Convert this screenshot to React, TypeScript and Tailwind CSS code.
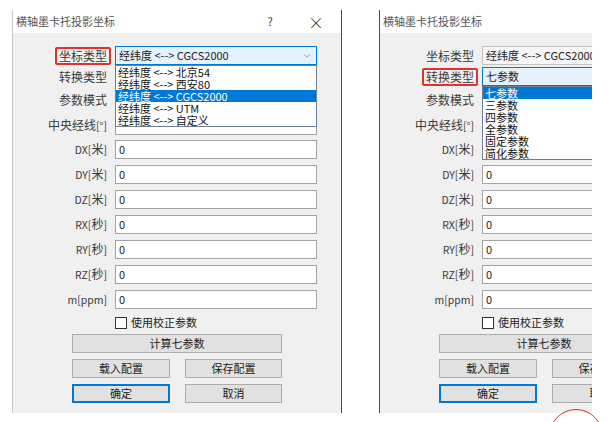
import { ChevronDown } from "lucide-react";

const font = { fontFamily: '"Noto Sans CJK SC", "Noto Sans", sans-serif' };

const coordOptions = ["经纬度 <--> 北京54", "经纬度 <--> 西安80", "经纬度 <--> CGCS2000", "经纬度 <--> UTM", "经纬度 <--> 自定义"];
const convOptions = ["七参数", "三参数", "四参数", "全参数", "固定参数", "简化参数"];

const fields = [
    { label: "DX[米]", mt: "mt-[5px]" },
    { label: "DY[米]", mt: "mt-[6px]" },
    { label: "DZ[米]", mt: "mt-[6px]" },
    { label: "RX[秒]", mt: "mt-[6px]" },
    { label: "RY[秒]", mt: "mt-[6px]" },
    { label: "RZ[秒]", mt: "mt-[6px]" },
    { label: "m[ppm]", mt: "mt-[6px]" },
];

// latin runs in the labels are set a bit smaller, like Segoe next to YaHei
function splitText(text: string) {
    return text.split(/([\x20-\x7e°]+)/).filter(Boolean).map((part, i) =>
        /^[\x20-\x7e°]+$/.test(part) ? <span key={i} className="text-[10.5px]">{part}</span> : <span key={i}>{part}</span>
    );
}

function Label({ text, marked }: { text: string; marked?: boolean }) {
    return (
        <div className="w-[98px] flex justify-end shrink-0">
            <span className={`border-2 rounded-[2px] px-[2px] leading-[14px] text-[12px] text-[#3a3a3a] whitespace-nowrap ${marked ? "border-[#e0322c]" : "border-transparent"}`}>
                {splitText(text)}
            </span>
        </div>
    );
}

function DropList({ items, selected }: { items: string[]; selected: number }) {
    return (
        <div className="absolute left-0 top-full w-[202px] bg-white border border-[#6d7f96] z-10">
            {items.map((it, i) => (
                <div key={i} className={`h-[12px] leading-[12px] text-[11px] pl-[2px] whitespace-nowrap ${i === selected ? "bg-[#0078d7] text-white" : "text-[#111]"}`}>
                    {it}
                </div>
            ))}
        </div>
    );
}

function Combo({ value, focused, list }: { value: string; focused?: boolean; list?: React.ReactNode }) {
    return (
        <div className="relative ml-[4px]">
            <div className={`w-[202px] h-[19px] border flex items-center pl-[3px] pr-[4px] text-[11px] text-[#222] ${focused ? "bg-[#e5f1fb] border-[#0078d7]" : "bg-[#f6f6f6] border-[#c2c2c2]"}`}>
                <span className="flex-1 whitespace-nowrap">{value}</span>
                <ChevronDown size={10} strokeWidth={1.5} className="text-[#666]" />
            </div>
            {list}
        </div>
    );
}

function Field({ value = "0", h = "h-[19px]" }: { value?: string; h?: string }) {
    return (
        <div className={`ml-[4px] w-[202px] ${h} bg-white border border-[#a3a3a3] flex items-center pl-[3px] text-[11px] text-[#222]`}>
            {value}
        </div>
    );
}

function Btn({ text, w, primary }: { text: string; w: string; primary?: boolean }) {
    return (
        <div className={`${w} h-[19px] flex items-center justify-center text-[11px] text-[#222] bg-[#e1e1e1] ${primary ? "border-2 border-[#0078d7]" : "border border-[#adadad]"}`}>
            {text}
        </div>
    );
}

function Dialog({ variant, edge }: { variant: "coord" | "conv"; edge: string }) {
    const coordOpen = variant === "coord";
    return (
        <div className={`w-[330px] h-[403px] shrink-0 bg-[#f0f0f0] flex flex-col ${edge}`} style={font}>
            <div className="h-[23px] bg-white flex items-center pl-[3px] pr-[17px] text-[11px] text-[#555]">
                <span className="flex-1">横轴墨卡托投影坐标</span>
                <span className="w-[12px] text-center text-[#333]">?</span>
                <span className="ml-[32px] text-[16px] leading-none font-light text-[#333]">×</span>
            </div>
            <div className="flex flex-col pt-[13px]">
                <div className="flex items-center h-[19px] relative z-20">
                    <Label text="坐标类型" marked={coordOpen} />
                    <Combo value="经纬度 <--> CGCS2000" focused={coordOpen} list={coordOpen ? <DropList items={coordOptions} selected={2} /> : null} />
                </div>
                <div className="flex items-center h-[19px] mt-[2px] relative z-10">
                    <Label text="转换类型" marked={!coordOpen} />
                    <Combo value="七参数" focused={!coordOpen} list={!coordOpen ? <DropList items={convOptions} selected={0} /> : null} />
                </div>
                <div className="flex items-center h-[19px] mt-[4px]">
                    <Label text="参数模式" />
                    <Combo value="" />
                </div>
                <div className="flex items-center h-[20px] mt-[6px]">
                    <Label text="中央经线[°]" />
                    <Field value="" h="h-[20px]" />
                </div>
                {fields.map((f) => (
                    <div key={f.label} className={`flex items-center h-[19px] ${f.mt}`}>
                        <Label text={f.label} />
                        <Field />
                    </div>
                ))}
                <div className="flex items-center h-[13px] mt-[7px] pl-[102px]">
                    <div className="w-[12px] h-[12px] bg-white border border-[#333]" />
                    <span className="ml-[4px] text-[11px] text-[#222]">使用校正参数</span>
                </div>
                <div className="flex mt-[5px] pl-[59px]">
                    <Btn text="计算七参数" w="w-[210px]" />
                </div>
                <div className="flex gap-[15px] mt-[6px] pl-[59px]">
                    <Btn text="载入配置" w="w-[98px]" />
                    <Btn text="保存配置" w="w-[97px]" />
                </div>
                <div className="flex gap-[15px] mt-[6px] pl-[59px]">
                    <Btn text="确定" w="w-[98px]" primary />
                    <Btn text="取消" w="w-[97px]" />
                </div>
            </div>
        </div>
    );
}

export default function App() {
    return (
        <div className="w-[610px] h-[422px] bg-white relative overflow-hidden flex items-start pt-[10px] pl-[12px]">
            <Dialog variant="coord" edge="border-l border-l-[#c8c8c8] border-r border-r-[#4a4a4a]" />
            <div className="ml-[37px] w-[213px] h-[403px] overflow-hidden shrink-0">
                <Dialog variant="conv" edge="border-l border-l-[#4a4a4a]" />
            </div>
            <div className="absolute left-[549px] top-[409px] w-[54px] h-[54px] rounded-full border border-[#e0322c]" />
        </div>
    );
}
